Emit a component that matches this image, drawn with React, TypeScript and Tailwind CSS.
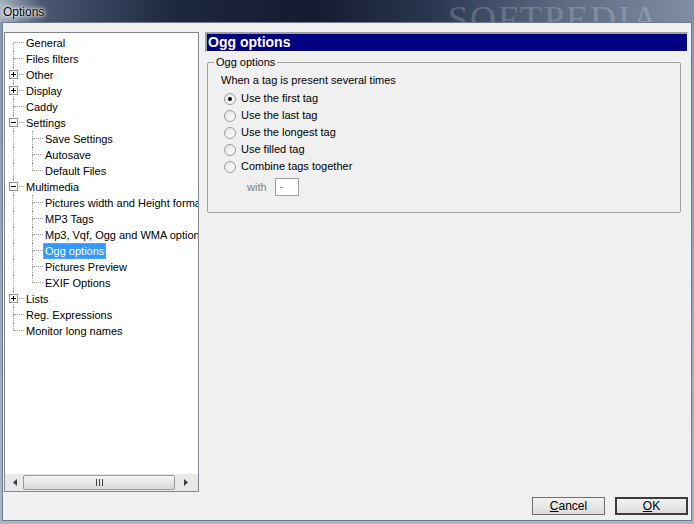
import React from "react";

type Row = { label: string; level: 0 | 1; box?: "+" | "-"; lastChild?: boolean; selected?: boolean };

const rows: Row[] = [
  { label: "General", level: 0 },
  { label: "Files filters", level: 0 },
  { label: "Other", level: 0, box: "+" },
  { label: "Display", level: 0, box: "+" },
  { label: "Caddy", level: 0 },
  { label: "Settings", level: 0, box: "-" },
  { label: "Save Settings", level: 1 },
  { label: "Autosave", level: 1 },
  { label: "Default Files", level: 1, lastChild: true },
  { label: "Multimedia", level: 0, box: "-" },
  { label: "Pictures width and Height format", level: 1 },
  { label: "MP3 Tags", level: 1 },
  { label: "Mp3, Vqf, Ogg and WMA options", level: 1 },
  { label: "Ogg options", level: 1, selected: true },
  { label: "Pictures Preview", level: 1 },
  { label: "EXIF Options", level: 1, lastChild: true },
  { label: "Lists", level: 0, box: "+" },
  { label: "Reg. Expressions", level: 0 },
  { label: "Monitor long names", level: 0 },
];

function Box({ sign }: { sign: "+" | "-" }) {
  return (
    <div className="absolute left-[4px] top-[3px] w-[9px] h-[9px] border border-[#919191] bg-white flex items-center justify-center z-10">
      <div className="absolute left-[1px] top-[3px] w-[5px] h-[1px] bg-black" />
      {sign === "+" && <div className="absolute left-[3px] top-[1px] w-[1px] h-[5px] bg-black" />}
    </div>
  );
}

function TreeRow({ row, index }: { row: Row; index: number }) {
  const first = index === 0;
  const last = index === rows.length - 1;
  return (
    <div className="flex h-[16px] items-center whitespace-nowrap">
      <div className="relative w-[19px] h-[16px] shrink-0">
        {row.level === 0 ? (
          <>
            {!first && <div className="absolute left-[8px] top-0 h-[8px] border-l border-dotted border-[#a0a0a0]" />}
            {!last && <div className="absolute left-[8px] top-[8px] h-[8px] border-l border-dotted border-[#a0a0a0]" />}
            <div className="absolute left-[9px] top-[7px] w-[10px] border-t border-dotted border-[#a0a0a0]" />
            {row.box && <Box sign={row.box} />}
          </>
        ) : (
          <div className="absolute left-[8px] top-0 h-[16px] border-l border-dotted border-[#a0a0a0]" />
        )}
      </div>
      {row.level === 1 && (
        <div className="relative w-[19px] h-[16px] shrink-0">
          <div className="absolute left-[8px] top-0 h-[8px] border-l border-dotted border-[#a0a0a0]" />
          {!row.lastChild && <div className="absolute left-[8px] top-[8px] h-[8px] border-l border-dotted border-[#a0a0a0]" />}
          <div className="absolute left-[9px] top-[7px] w-[10px] border-t border-dotted border-[#a0a0a0]" />
        </div>
      )}
      <span
        className={
          row.selected
            ? "ml-[0px] px-[1px] h-[16px] leading-[14px] bg-[#3399ff] text-white border border-dotted border-[#e0a040]"
            : "ml-[1px] px-[1px] h-[16px] leading-[16px] text-black"
        }
      >
        {row.label}
      </span>
    </div>
  );
}

function Radio({ checked, label }: { checked?: boolean; label: string }) {
  return (
    <div className="flex items-center h-[17px]">
      <div className="w-[12px] h-[12px] rounded-full border border-[#9a9a9a] bg-gradient-to-br from-[#e4e4e4] to-white flex items-center justify-center shrink-0">
        {checked && <div className="w-[4px] h-[4px] rounded-full bg-black" />}
      </div>
      <span className="ml-[5px] text-black">{label}</span>
    </div>
  );
}

export default function App() {
  return (
    <div
      className="w-[694px] h-[524px] overflow-hidden flex flex-col text-[11px] bg-gradient-to-b from-[#8797ad] to-[#a9b6c6]"
      style={{ fontFamily: '"Liberation Sans", Arial, sans-serif' }}
    >
      {/* Title bar */}
      <div className="relative h-[22px] shrink-0 bg-[linear-gradient(90deg,#a6b2c0_0%,#4a5872_6%,#1d2740_25%,#141b30_45%,#2a3650_62%,#5a6880_80%,#7f8ea4_100%)] overflow-hidden">
        <span className="absolute left-[3px] top-[3px] text-[12px] text-black [text-shadow:0_0_6px_#ffffff,0_0_4px_#ffffff,0_0_2px_#ffffff]">
          Options
        </span>
        <span
          className="absolute left-[448px] top-[-8px] text-[36px] tracking-[2px] text-white/20"
          style={{ fontFamily: '"Liberation Serif", serif' }}
        >
          SOFTPEDIA
        </span>
      </div>

      {/* Window body */}
      <div className="flex-1 mx-[2px] mb-[3px] border-t border-[#3b4454] border-l border-r border-b border-[#6d7a8c] bg-[#f0f0f0] flex flex-col">
        <div className="flex pt-[9px] pl-[1px] h-[470px]">
          {/* Tree panel */}
          <div className="w-[195px] h-[460px] border border-[#828790] bg-white flex flex-col">
            <div className="flex-1 pt-[2px] overflow-hidden">
              {rows.map((r, i) => (
                <TreeRow key={r.label} row={r} index={i} />
              ))}
            </div>
            {/* Horizontal scrollbar */}
            <div className="h-[17px] bg-[#e8e8e8] flex items-center px-[1px]">
              <div className="w-[17px] h-[15px] flex items-center justify-center">
                <svg width="4" height="7" viewBox="0 0 4 7"><path d="M4 0 L0 3.5 L4 7Z" fill="#404040" /></svg>
              </div>
              <div className="w-[152px] h-[15px] rounded-[2px] border border-[#9a9a9a] bg-gradient-to-b from-[#f4f4f4] to-[#d8d8d8] flex items-center justify-center">
                <svg width="7" height="7" viewBox="0 0 7 7">
                  <path d="M0.5 0V7M3.5 0V7M6.5 0V7" stroke="#404040" strokeWidth="1" />
                </svg>
              </div>
              <div className="flex-1 h-[15px] flex items-center justify-center">
                <svg width="4" height="7" viewBox="0 0 4 7"><path d="M0 0 L4 3.5 L0 7Z" fill="#404040" /></svg>
              </div>
            </div>
          </div>

          {/* Right area */}
          <div className="ml-[6px] w-[483px] flex flex-col">
            <div className="h-[20px] border-t-2 border-l-2 border-[#a0a0a0] border-b border-r border-b-white border-r-white bg-[#000080] text-white font-bold text-[14px] leading-[17px] pl-[1px]">
              Ogg options
            </div>
            <div className="relative mt-[10px] ml-[2px] w-[474px] h-[151px] border border-[#a0a0a0] rounded-[2px]">
              <span className="absolute left-[6px] top-[-8px] bg-[#f0f0f0] px-[2px] text-[11px] leading-[14px] text-black">
                Ogg options
              </span>
              <div className="pt-[9px] pl-[13px] text-[11px]">
                <div className="h-[16px] leading-[16px] text-black">When a tag is present several times</div>
                <div className="pl-[3px] mt-[2px]">
                  <Radio checked label="Use the first tag" />
                  <Radio label="Use the last tag" />
                  <Radio label="Use the longest tag" />
                  <Radio label="Use filled tag" />
                  <Radio label="Combine tags together" />
                </div>
                <div className="flex items-center mt-[3px] pl-[26px]">
                  <span className="text-[#808080]">with</span>
                  <div className="ml-[8px] w-[24px] h-[18px] border border-[#a0a0a0] bg-white text-[#808080] leading-[14px] pl-[4px]">
                    -
                  </div>
                </div>
              </div>
            </div>
          </div>
        </div>

        {/* Buttons */}
        <div className="flex justify-end gap-[10px] pr-[3px] mt-[4px]">
          <button className="w-[73px] h-[18px] border border-[#707070] bg-gradient-to-b from-[#f2f2f2] to-[#dcdcdc] text-[12px] leading-[14px] text-black">
            <span className="underline">C</span>ancel
          </button>
          <button className="w-[73px] h-[18px] border-2 border-[#3c3c3c] bg-gradient-to-b from-[#f2f2f2] to-[#dcdcdc] text-[12px] leading-[12px] text-black">
            <span className="underline">O</span>K
          </button>
        </div>
      </div>
    </div>
  );
}
